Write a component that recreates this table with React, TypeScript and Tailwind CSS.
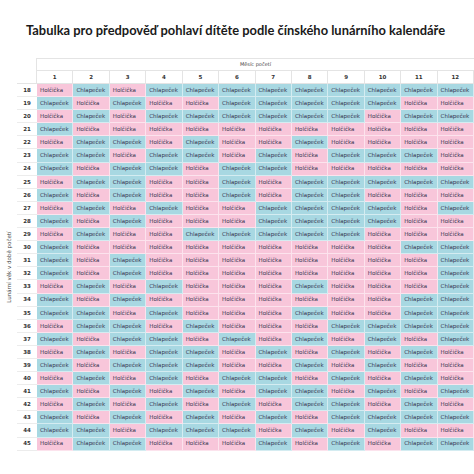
import React from "react";

const H = "Holčička";
const C = "Chlapeček";

const raw: string[] = [
  "HCHCCCCCCCCC", // 18
  "CHCHHCCCCCHH", // 19
  "HCHCCCCCCHCC", // 20
  "CHHHHHHHHHHH", // 21
  "HCCHCHHCHHHH", // 22
  "CCHCCHCHCCCH", // 23
  "CHCCHCCHHHHH", // 24
  "HCCHHCHCCCCC", // 25
  "CHCHHCHCCHHH", // 26
  "HCHCHHCCCCHC", // 27
  "CHCHHHCCCCHH", // 28
  "HCHHCCCCCHHH", // 29
  "CHHHHHHHHHCC", // 30
  "CHCHHHHHHHHC", // 31
  "CHCHHHHHHHHC", // 32
  "HCHCHHHCHHHC", // 33
  "CHCHHHHHHHCC", // 34
  "CCHCHHHCHHCC", // 35
  "HCCHCHHHCCCC", // 36
  "CHCCHCHCHCHC", // 37
  "HCHCCHCHCHCH", // 38
  "CHCCCHHCHCHH", // 39
  "HCHCHCCHCHCH", // 40
  "CHCHCHCCHCHC", // 41
  "HCHCHCHCCHCH", // 42
  "CHCHCHCHCCCC", // 43
  "CCHCCCHCHCHH", // 44
  "HCCHHHCHCHCC", // 45
];

const months = Array.from({ length: 12 }, (_, i) => i + 1);

export default function App() {
  return (
    <div
      className="w-[474px] h-[474px] bg-white overflow-hidden"
      style={{ fontFamily: "Lato, 'DejaVu Sans', sans-serif" }}
    >
      <div className="h-[58px] flex items-start pt-[21px] pl-[26px]">
        <h1 className="text-[12.9px] font-bold text-[#1a1a1a] leading-[18px] whitespace-nowrap">
          Tabulka pro předpověď pohlaví dítěte podle čínského lunárního kalendáře
        </h1>
      </div>
      <div
        className="grid grid-cols-[17px_20px_repeat(12,1fr)] w-[474px] text-[#34344f]"
        style={{ fontFamily: "'DejaVu Sans', sans-serif" }}
      >
        {/* header row 1 */}
        <div className="h-[13px]" />
        <div className="h-[13px] border-r border-[#e4e4e4]" />
        <div className="col-span-12 h-[13px] border-t border-b border-[#e4e4e4] flex items-center justify-center text-[5px] text-[#444]">
          Měsíc početí
        </div>
        {/* header row 2 */}
        <div className="h-[13px]" />
        <div className="h-[13px] border-r border-b border-[#e4e4e4]" />
        {months.map((m) => (
          <div
            key={m}
            className="h-[13px] border-r border-b border-[#e4e4e4] flex items-center justify-center text-[5.5px] font-bold text-[#333]"
          >
            {m}
          </div>
        ))}
        {/* body */}
        <div
          className="flex items-center justify-center"
          style={{ gridRow: "span 28 / span 28" }}
        >
          <div className="-rotate-90 whitespace-nowrap text-[5.5px] text-[#444]">
            Lunární věk v době početí
          </div>
        </div>
        {raw.map((row, ri) => (
          <React.Fragment key={ri}>
            <div className="h-[13.1px] border-b border-[#ececec] flex items-center justify-center text-[5.5px] font-bold text-[#333]">
              {18 + ri}
            </div>
            {row.split("").map((v, ci) => (
              <div
                key={ci}
                className={`h-[13.1px] flex items-center pl-[3px] text-[5.5px] whitespace-nowrap overflow-hidden border-r border-b border-white/50 ${
                  v === "H" ? "bg-[#f8c6da]" : "bg-[#a8d8e2]"
                }`}
              >
                {v === "H" ? H : C}
              </div>
            ))}
          </React.Fragment>
        ))}
      </div>
    </div>
  );
}
